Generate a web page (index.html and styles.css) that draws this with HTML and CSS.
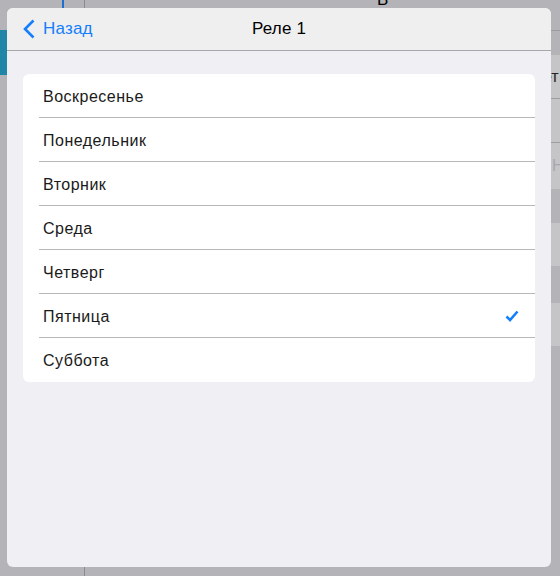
FILE: index.html
```html
<!DOCTYPE html>
<html lang="ru">

<head>
    <meta charset="UTF-8">
    <meta name="viewport" content="width=device-width, initial-scale=1.0">
    <title>Реле 1</title>
    <link rel="stylesheet" href="styles.css">
</head>

<body>
    <!-- App behind the popover -->
    <div class="backdrop">
        <div class="sidebar">
            <div class="sidebar-top"><span class="sidebar-mark"></span></div>
            <div class="sidebar-active"></div>
        </div>
        <div class="main">
            <div class="main-header"><span class="main-title">В</span></div>
            <div class="main-gap"></div>
            <div class="main-row light"><span class="row-value">Свет</span></div>
            <div class="main-row light"></div>
            <div class="main-row light tall"><span class="row-value dim">Нет</span></div>
            <div class="band dark b34"></div>
            <div class="band light b43"></div>
            <div class="band dark b37"></div>
            <div class="band light b43"></div>
        </div>
    </div>

    <!-- Popover -->
    <div class="popover">
        <div class="nav-bar">
            <a class="back-button" href="#">
                <svg class="chevron" width="12" height="20" viewBox="0 0 12 20">
                    <path d="M10.5 1.5 L2 10 L10.5 18.5" fill="none" stroke="#157efb" stroke-width="2.6" />
                </svg>
                Назад
            </a>
            <div class="nav-title">Реле 1</div>
        </div>
        <div class="content">
            <ul class="day-list">
                <li class="day">Воскресенье</li>
                <li class="day">Понедельник</li>
                <li class="day">Вторник</li>
                <li class="day">Среда</li>
                <li class="day">Четверг</li>
                <li class="day">Пятница
                    <svg class="check" width="14" height="12" viewBox="0 0 14 12">
                        <path d="M1.5 6.5 L5 10 L12.5 1.5" fill="none" stroke="#157efb" stroke-width="2.6" />
                    </svg>
                </li>
                <li class="day">Суббота</li>
            </ul>
        </div>
    </div>
</body>

</html>
```

FILE: styles.css
```css
body {
    margin: 0;
    width: 560px;
    height: 576px;
    overflow: hidden;
    position: relative;
    background-color: #b4b3b8;
    font-family: 'Liberation Sans', Arial, sans-serif;
    color: #000;
}

/* background app */
.backdrop {
    display: flex;
    height: 576px;
}

.sidebar {
    width: 84px;
    border-right: 1px solid #8d8c90;
}

.sidebar-top {
    height: 30px;
    position: relative;
}

.sidebar-mark {
    position: absolute;
    left: 62px;
    top: 0;
    width: 2px;
    height: 10px;
    background-color: #1b6fd0;
}

.sidebar-active {
    height: 45px;
    background-color: #1f86a8;
}

.main {
    flex: 1;
    overflow: hidden;
}

.main-header {
    height: 30px;
    border-bottom: 1px solid #9c9ba0;
    position: relative;
}

.main-title {
    position: absolute;
    left: 292px;
    top: -10px;
    font-size: 17px;
}

.main-gap {
    height: 24px;
}

.main-row {
    height: 43px;
    border-bottom: 1px solid #9c9ba0;
    position: relative;
}

.main-row.tall {
    height: 46px;
    border-bottom: none;
}

.light {
    background-color: #c5c5c7;
}

.dark {
    background-color: #b4b3b8;
}

.b34 {
    height: 34px;
}

.b37 {
    height: 37px;
}

.b43 {
    height: 43px;
}

.row-value {
    position: absolute;
    left: 438px;
    top: 13px;
    font-size: 16px;
    color: #222;
}

.row-value.dim {
    top: 14px;
    left: 467px;
    color: #a8a8ab;
}

/* popover */
.popover {
    position: absolute;
    left: 7px;
    top: 8px;
    width: 544px;
    height: 559px;
    border-radius: 6px;
    overflow: hidden;
    background-color: #efeff4;
}

.nav-bar {
    height: 42px;
    background-color: #efefef;
    border-bottom: 1px solid #a7a7aa;
    position: relative;
    display: flex;
    align-items: center;
    justify-content: center;
}

.back-button {
    position: absolute;
    left: 16px;
    top: 0;
    height: 42px;
    display: flex;
    align-items: center;
    gap: 8px;
    color: #157efb;
    text-decoration: none;
    font-size: 17px;
    letter-spacing: 0.2px;
}

.nav-title {
    font-size: 17px;
    font-weight: 500;
    letter-spacing: 0.2px;
}

.content {
    padding: 23px 16px 0;
}

.day-list {
    list-style: none;
    margin: 0;
    padding: 0;
    background-color: #fff;
    border-radius: 6px;
    overflow: hidden;
}

.day {
    margin-left: 16px;
    padding-left: 4px;
    padding-right: 16px;
    padding-top: 2px;
    box-sizing: border-box;
    height: 44px;
    border-bottom: 1px solid #b8b8bb;
    display: flex;
    align-items: center;
    justify-content: space-between;
    font-size: 16px;
    letter-spacing: 0.5px;
    color: #1a1a1a;
}

.day:last-child {
    border-bottom: none;
}

.check {
    margin-top: -2px;
}
```
